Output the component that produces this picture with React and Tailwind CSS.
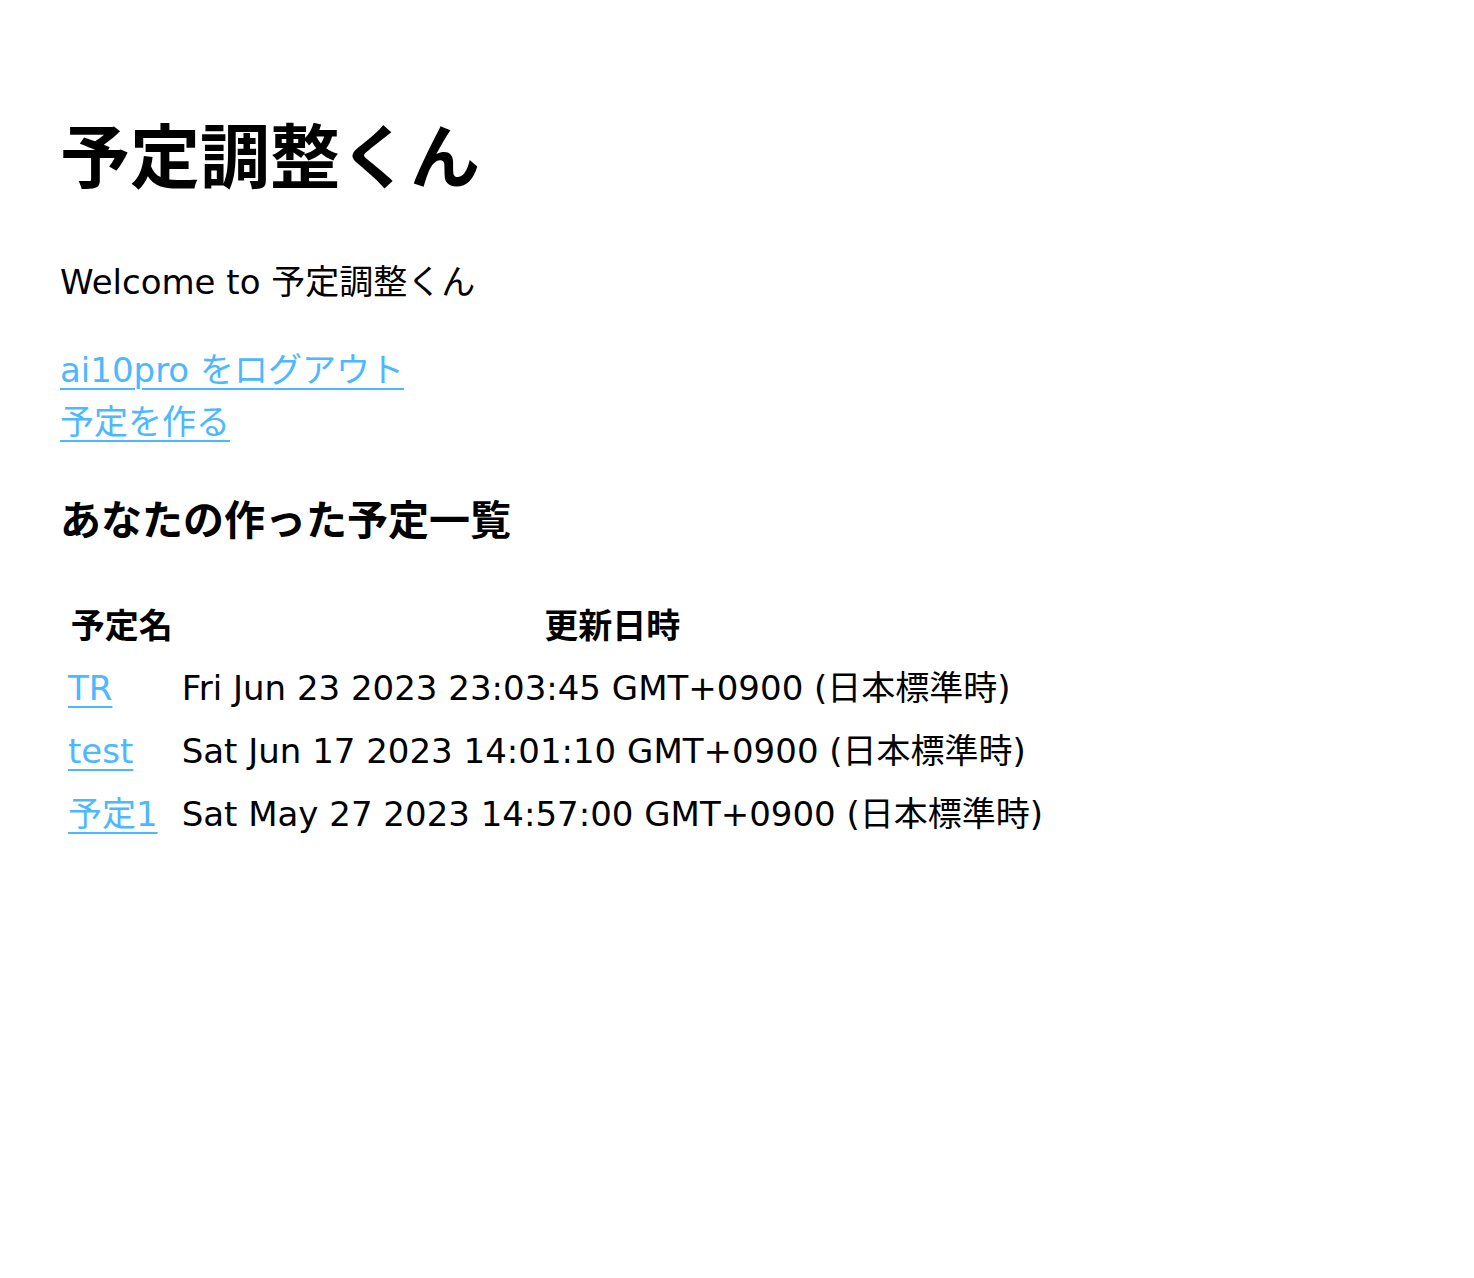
import React from "react";

const font = { fontFamily: '"DejaVu Sans", "Noto Sans CJK JP", sans-serif' };

const events = [
  { name: "TR", updatedAt: "Fri Jun 23 2023 23:03:45 GMT+0900 (日本標準時)" },
  { name: "test", updatedAt: "Sat Jun 17 2023 14:01:10 GMT+0900 (日本標準時)" },
  { name: "予定1", updatedAt: "Sat May 27 2023 14:57:00 GMT+0900 (日本標準時)" },
];

export default function App() {
  return (
    <div
      className="min-h-[1278px] bg-white px-[60px] pt-[103px] text-black text-[34px] leading-[52px] font-['DejaVu_Sans','Noto_Sans_CJK_JP',sans-serif]"
    >
      <h1 className="text-[70px] font-bold leading-[100px] font-['Noto_Sans_CJK_JP',sans-serif]">
        予定調整くん
      </h1>

      <p className="mt-[53px]">Welcome to 予定調整くん</p>

      {/* links */}
      <div className="mt-[36px] flex flex-col items-start">
        <a href="#" className="text-[#4cb8ff] underline decoration-2 underline-offset-[6px]">
          ai10pro をログアウト
        </a>
        <a href="#" className="text-[#4cb8ff] underline decoration-2 underline-offset-[6px]">
          予定を作る
        </a>
      </div>

      <h2 className="mt-[43px] text-[41px] font-bold leading-[52px] font-['Noto_Sans_CJK_JP',sans-serif]">
        あなたの作った予定一覧
      </h2>

      <table className="mt-[48px] border-separate border-spacing-[2px] ml-[4px]">
        <thead>
          <tr>
            <th className="px-[2px] py-[5px] font-bold text-center font-['Noto_Sans_CJK_JP',sans-serif]">予定名</th>
            <th className="px-[2px] py-[5px] font-bold text-center font-['Noto_Sans_CJK_JP',sans-serif]">更新日時</th>
          </tr>
        </thead>
        <tbody>
          {events.map((e) => (
            <tr key={e.name}>
              <td className="px-[2px] py-[4.5px] pr-[20px]">
                <a href="#" className="text-[#4cb8ff] underline decoration-2 underline-offset-[6px]">
                  {e.name}
                </a>
              </td>
              <td className="px-[2px] py-[4.5px]" style={font}>
                {e.updatedAt}
              </td>
            </tr>
          ))}
        </tbody>
      </table>
    </div>
  );
}
